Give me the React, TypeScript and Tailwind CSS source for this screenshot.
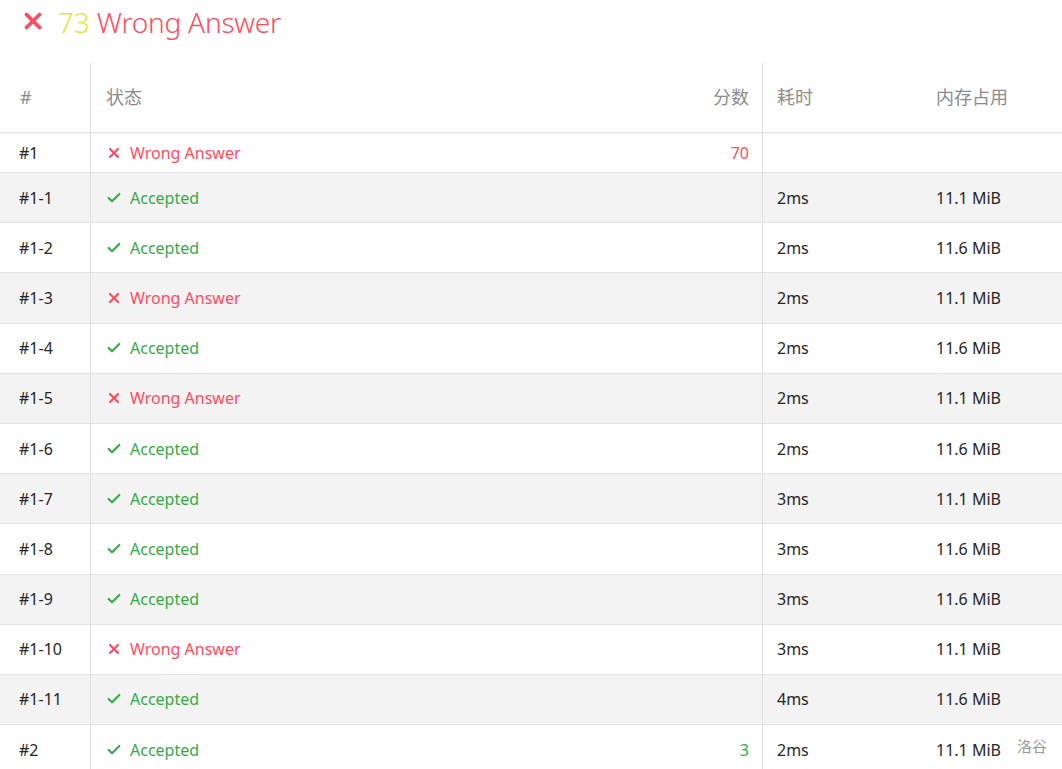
import { Check, X } from 'lucide-react'

type Row = {
  id: string
  ok: boolean
  score?: string
  time?: string
  mem?: string
}

const rows: Row[] = [
  { id: '#1', ok: false, score: '70' },
  { id: '#1-1', ok: true, time: '2ms', mem: '11.1 MiB' },
  { id: '#1-2', ok: true, time: '2ms', mem: '11.6 MiB' },
  { id: '#1-3', ok: false, time: '2ms', mem: '11.1 MiB' },
  { id: '#1-4', ok: true, time: '2ms', mem: '11.6 MiB' },
  { id: '#1-5', ok: false, time: '2ms', mem: '11.1 MiB' },
  { id: '#1-6', ok: true, time: '2ms', mem: '11.6 MiB' },
  { id: '#1-7', ok: true, time: '3ms', mem: '11.1 MiB' },
  { id: '#1-8', ok: true, time: '3ms', mem: '11.6 MiB' },
  { id: '#1-9', ok: true, time: '3ms', mem: '11.6 MiB' },
  { id: '#1-10', ok: false, time: '3ms', mem: '11.1 MiB' },
  { id: '#1-11', ok: true, time: '4ms', mem: '11.6 MiB' },
  { id: '#2', ok: true, score: '3', time: '2ms', mem: '11.1 MiB' },
]

const font = { fontFamily: '"Noto Sans", "Noto Sans CJK SC", sans-serif' }

export default function App() {
  return (
    <div className="relative h-[769px] w-[1062px] overflow-hidden bg-white text-[#262626]" style={font}>
      <div className="flex h-[63px] items-start gap-[12px] pl-[20px] pt-[6px]">
        <X size={26} strokeWidth={3.5} className="mt-[2px] text-[#fe4c61]" />
        <div className="text-[28px] font-light leading-[32px] tracking-[-0.2px]">
          <span className="text-[#dfe63a]">73</span> <span className="text-[#fe4c61]">Wrong Answer</span>
        </div>
      </div>

      <div className="grid h-[70px] grid-cols-[91px_672px_159px_1fr] border-b border-[#e0e0e0] text-[18px] text-[#8c8c8c]">
        <div className="flex items-center border-r border-[#e0e0e0] pl-5">#</div>
        <div className="flex items-center justify-between border-r border-[#e0e0e0] pl-[15px] pr-[13px]">
          <span>状态</span>
          <span>分数</span>
        </div>
        <div className="flex items-center pl-[14px]">耗时</div>
        <div className="flex items-center pl-[14px]">内存占用</div>
      </div>

      {rows.map((r, i) => (
        <div
          key={r.id}
          className={`grid grid-cols-[91px_672px_159px_1fr] border-b border-[#e3e3e3] text-[16px] ${
            i === 0 ? 'h-[40px] shadow-[inset_0_4px_4px_-4px_rgba(0,0,0,0.08)]' : 'h-[50.2px]'
          } ${i % 2 === 1 ? 'bg-[#f3f3f3]' : 'bg-white'}`}
        >
          <div className="flex items-center border-r border-[#e0e0e0] pl-[19px]">{r.id}</div>
          <div className="flex items-center justify-between border-r border-[#e0e0e0] pl-[15px] pr-[13px]">
            <span className={`flex items-center gap-[8px] ${r.ok ? 'text-[#35aa47]' : 'text-[#fe4c61]'}`}>
              {r.ok ? <Check size={16} strokeWidth={3.2} /> : <X size={16} strokeWidth={3.2} />}
              {r.ok ? 'Accepted' : 'Wrong Answer'}
            </span>
            {r.score && <span className={r.ok ? 'text-[#35aa47]' : 'text-[#fe4c61]'}>{r.score}</span>}
          </div>
          <div className="flex items-center pl-[14px]">{r.time}</div>
          <div className="flex items-center pl-[14px]">{r.mem}</div>
        </div>
      ))}

      <div className="absolute right-[15px] top-[735px] text-[15px] text-[#999]">洛谷</div>
    </div>
  )
}
